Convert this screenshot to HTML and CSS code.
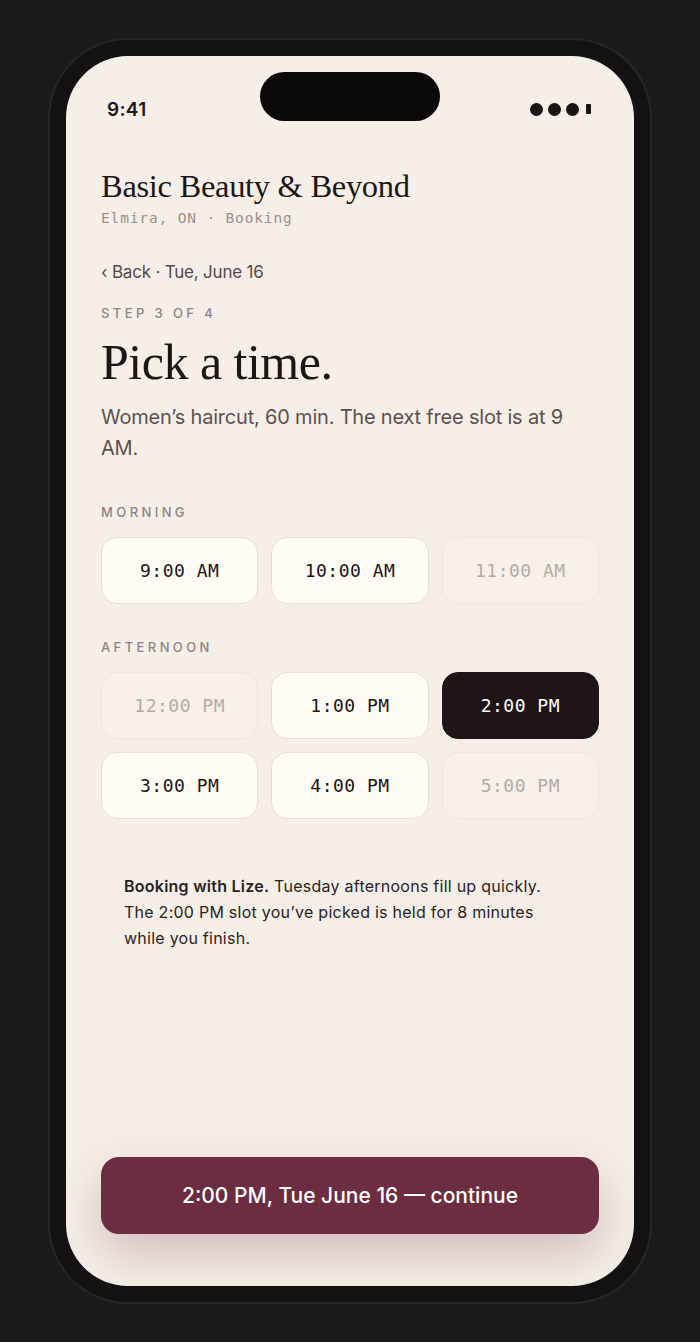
FILE: index.html
```html
<!DOCTYPE html>
<html lang="en">
<head>
<meta charset="utf-8">
<title>Pick a time — Basic Beauty &amp; Beyond</title>
<link rel="stylesheet" href="styles.css">
</head>
<body>
<div class="phone">
  <div class="screen">
    <div class="island"></div>
    <div class="status">
      <span class="clock">9:41</span>
      <span class="signal"><i class="dot"></i><i class="dot"></i><i class="dot"></i><i class="bar"></i></span>
    </div>

    <header class="brand">
      <h1 class="brand-name">Basic Beauty &amp; Beyond</h1>
      <div class="brand-sub">Elmira, ON · Booking</div>
    </header>

    <div class="back">‹ Back · Tue, June 16</div>
    <div class="step">STEP 3 OF 4</div>
    <h2 class="headline">Pick a time.</h2>
    <p class="lead">Women’s haircut, 60 min. The next free slot is at 9 AM.</p>

    <div class="group-label morning">MORNING</div>
    <div class="slots">
      <button class="slot">9:00 AM</button>
      <button class="slot">10:00 AM</button>
      <button class="slot off">11:00 AM</button>
    </div>

    <div class="group-label afternoon">AFTERNOON</div>
    <div class="slots">
      <button class="slot off">12:00 PM</button>
      <button class="slot">1:00 PM</button>
      <button class="slot on">2:00 PM</button>
      <button class="slot">3:00 PM</button>
      <button class="slot">4:00 PM</button>
      <button class="slot off">5:00 PM</button>
    </div>

    <div class="note"><b>Booking with Lize.</b> Tuesday afternoons fill up quickly. The 2:00 PM slot you’ve picked is held for 8 minutes while you finish.</div>

    <button class="cta">2:00 PM, Tue June 16 — continue</button>
  </div>
</div>
</body>
</html>
```

FILE: styles.css
```css
* { box-sizing: border-box; }
html, body { margin: 0; padding: 0; }
body {
  background: #1b1a19;
  width: 700px;
  height: 1342px;
  font-family: Inter, "Noto Sans", sans-serif;
}
.phone {
  margin: 38px 0 0 48px;
  width: 604px;
  height: 1266px;
  border-radius: 80px;
  background: #131211;
  border: 2px solid #282624;
  padding: 16px;
}
.screen {
  position: relative;
  width: 568px;
  height: 1230px;
  border-radius: 62px;
  background: #f5efe8;
  overflow: hidden;
  padding: 0 35px 52px;
  display: flex;
  flex-direction: column;
}
.island {
  position: absolute;
  left: 194px;
  top: 16px;
  width: 180px;
  height: 49px;
  border-radius: 25px;
  background: #0b0908;
}
.status {
  display: flex;
  justify-content: space-between;
  align-items: center;
  height: 22px;
  margin-top: 42px;
  padding: 0 8px 0 6px;
}
.clock {
  font-size: 19px;
  font-weight: 600;
  color: #1d1718;
  letter-spacing: 0.3px;
}
.signal { display: flex; align-items: center; gap: 5px; }
.signal .dot {
  width: 13px; height: 13px; border-radius: 50%;
  background: #1a1416;
}
.signal .bar {
  width: 5px; height: 10px; background: #1a1416; margin-left: 2px; border-radius: 1px;
}
.brand { margin-top: 46px; }
.brand-name {
  margin: 0;
  font-family: "Liberation Serif", "DejaVu Serif", serif;
  font-weight: 400;
  font-size: 32.5px;
  line-height: 40px;
  color: #1d1617;
  letter-spacing: -0.3px;
}
.brand-sub {
  margin-top: 3px;
  font-family: "DejaVu Sans Mono", "Liberation Mono", monospace;
  font-size: 14.5px;
  line-height: 18px;
  letter-spacing: 0.85px;
  color: #9b908d;
}
.back {
  margin-top: 33px;
  font-size: 17px;
  line-height: 24px;
  color: #57494b;
  letter-spacing: -0.2px;
}
.step, .group-label {
  font-size: 13px;
  line-height: 16px;
  letter-spacing: 3.4px;
  color: #8f8285;
  font-weight: 500;
}
.step { margin-top: 21px; }
.headline {
  margin: 13px 0 0;
  font-family: "Liberation Serif", "DejaVu Serif", serif;
  font-weight: 400;
  font-size: 50px;
  line-height: 56px;
  color: #1d1617;
  letter-spacing: -0.5px;
}
.lead {
  margin: 12px 0 0;
  font-size: 20px;
  line-height: 31px;
  color: #5e4f51;
  letter-spacing: -0.2px;
}
.morning { margin-top: 40px; }
.afternoon { margin-top: 35px; }
.slots {
  margin-top: 17px;
  display: grid;
  grid-template-columns: repeat(3, 1fr);
  gap: 13px;
}
.slot {
  height: 67px;
  border-radius: 16px;
  border: 1.5px solid #e8dece;
  background: #fffcf6;
  font-family: "DejaVu Sans Mono", "Liberation Mono", monospace;
  font-size: 18px;
  letter-spacing: 0.5px;
  color: #1a1415;
  padding: 0;
}
.slot.off {
  background: #f7f1ea;
  border-color: #efe7dd;
  color: #b4aba6;
}
.slot.on {
  background: #1f1416;
  border-color: #1f1416;
  color: #ffffff;
}
.note {
  margin-top: 32px;
  padding: 22px 45px 22px 23px;
  font-size: 16px;
  line-height: 26px;
  color: #2b2223;
  letter-spacing: 0.25px;
}
.note b { font-weight: 600; }
.cta {
  margin-top: auto;
  height: 77px;
  border: none;
  border-radius: 18px;
  background: #6b2d3f;
  color: #ffffff;
  font-family: Inter, "Noto Sans", sans-serif;
  font-size: 21px;
  font-weight: 500;
  letter-spacing: 0;
  box-shadow: 0 20px 48px rgba(107, 45, 63, 0.26);
}
```
